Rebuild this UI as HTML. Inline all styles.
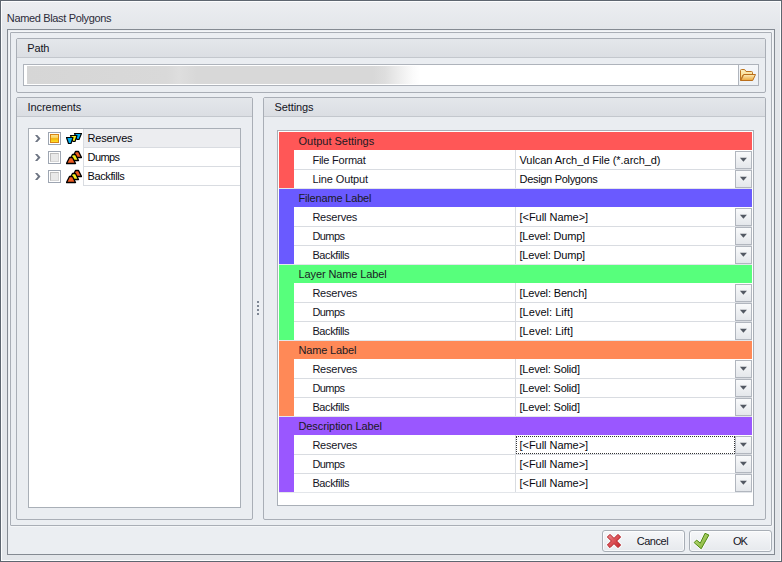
<!DOCTYPE html>
<html><head><meta charset="utf-8"><title>Named Blast Polygons</title>
<style>
html,body{margin:0;padding:0;}
body{width:782px;height:562px;overflow:hidden;background:#e3e6ea;font-family:"Liberation Sans", sans-serif;font-size:11px;color:#14141e;}
#w{position:absolute;left:0;top:0;width:780px;height:560px;border:1px solid #5e6670;background:linear-gradient(#eceef1,#e3e6ea 28px,#e3e6ea 28px);box-shadow:inset 0 0 0 1px #fcfdfe;}
.a{position:absolute;box-sizing:border-box;}
.t{position:absolute;white-space:pre;line-height:13px;height:13px;}
.grp{border:1px solid #a9aeb6;border-radius:2px;background:#eaedf1;}
.gh{left:0;top:0;right:0;height:19px;background:linear-gradient(#e4e7eb,#dbdee3);border-bottom:1px solid #c3c7cd;}
.btn{border:1px solid #a8aeb6;border-radius:3px;background:linear-gradient(#f6f7f9,#e6e9ed);box-shadow:inset 0 0 0 1px rgba(255,255,255,.7);}
.dd{border:1px solid #b1b6be;background:linear-gradient(#f9fafb,#e4e7eb);width:17px;height:18px;}
.cb{width:13px;height:13px;border:1px solid #9da5b1;background:#fff;}
.cb i{position:absolute;left:1px;top:1px;width:9px;height:9px;box-sizing:border-box;}
.chev{width:8px;height:10px;}
</style></head><body>
<div id="w"></div>

<span class="t" style="left:6.8px;top:12px;letter-spacing:-0.345px;color:#2c2c3a;">Named Blast Polygons</span>
<div class="a" style="left:7px;top:29px;width:768px;height:526px;border:1px solid #848a92;background:#ebeef2;"></div>
<div class="a" style="left:10px;top:32px;width:762px;height:494px;border:1px solid #a9aeb6;border-radius:1px;box-shadow:0 0 0 1px rgba(255,255,255,.45);"></div>
<div class="a grp" style="left:16px;top:38px;width:750px;height:55px;"><div class="a gh"></div></div>
<span class="t" style="left:27.3px;top:42px;letter-spacing:-0.150px;">Path</span>
<div class="a" style="left:23px;top:64px;width:736px;height:22px;border:1px solid #aeb3bb;background:#fff;"></div>
<div class="a" style="left:27px;top:66px;width:395px;height:18px;background:linear-gradient(90deg,#d6d6d6 0,#d9d9d9 140px,#dedede 152px,#d8d8d8 170px,#d8d8d8 346px,#dedede 358px,#efefef 374px,#fbfbfb 386px,#fff 393px);"></div>
<div class="a" style="left:738px;top:65px;width:20px;height:20px;border-left:1px solid #b0b5bd;background:linear-gradient(#f5f7fa,#ecf0f4);"></div>
<svg class="a" style="left:740px;top:69px" width="16" height="12" viewBox="0 0 16 12">
<defs><linearGradient id="fg" x1="0" y1="0" x2="0" y2="1"><stop offset="0" stop-color="#fdeebb"/><stop offset="1" stop-color="#eca638"/></linearGradient>
<linearGradient id="fb" x1="0" y1="0" x2="0" y2="1"><stop offset="0" stop-color="#fdf0c0"/><stop offset="1" stop-color="#f7cf6c"/></linearGradient></defs>
<path d="M0.5 11.5 V1.5 Q0.5 0.5 1.5 0.5 H4.6 L6 2.5 H11.5 Q12.5 2.5 12.5 3.5 V6 H3 Z" fill="url(#fb)" stroke="#bd751f" stroke-width="1" stroke-linejoin="round"/>
<path d="M0.8 11.5 L3.7 5.5 H15.5 L12.7 11.5 Z" fill="url(#fg)" stroke="#b96e1b" stroke-width="1" stroke-linejoin="round"/>
</svg>
<div class="a grp" style="left:16px;top:97px;width:237px;height:423px;"><div class="a gh"></div></div>
<span class="t" style="left:27.6px;top:101px;letter-spacing:-0.080px;">Increments</span>
<div class="a" style="left:28px;top:128px;width:213px;height:380px;border:1px solid #a9afb7;background:#fff;"></div>
<div class="a" style="left:83px;top:129px;width:157px;height:19px;background:#ecedf0;border-left:1px solid #d9dce1;border-bottom:1px solid #d9dce1;"></div>
<svg class="a" style="left:33px;top:133px" width="9" height="11" viewBox="0 0 9 11"><polygon points="2,2 4.3,2 7.5,5.5 4.3,9 2,9 4.9,5.5" fill="#6d7482"/></svg>
<div class="a cb" style="left:48px;top:132px;"><i style="background:linear-gradient(#fce492 0,#fad35a 40%,#f2b10c 52%,#f9cb14 75%,#fde02a 100%);border:1px solid #d98512;"></i></div>
<svg class="a" style="left:66px;top:130px" width="16" height="16" viewBox="0 0 16 16" stroke="#000" stroke-width="1.2" stroke-linejoin="round">
<polygon points="8.5,3.5 15.5,3.5 13,9.5 11,9.5" fill="#00aeef"/>
<polygon points="4.5,5.5 11,5.5 9,11.5 7,11.5" fill="#f6f01e"/>
<polygon points="0.5,7.5 7,7.5 5,13.5 2.5,13.5" fill="#00aeef"/></svg>
<span class="t" style="left:87.6px;top:132px;letter-spacing:-0.213px;color:#08080e;">Reserves</span>
<div class="a" style="left:83px;top:148px;width:157px;height:19px;background:#fff;border-left:1px solid #d9dce1;border-bottom:1px solid #d9dce1;"></div>
<svg class="a" style="left:33px;top:152px" width="9" height="11" viewBox="0 0 9 11"><polygon points="2,2 4.3,2 7.5,5.5 4.3,9 2,9 4.9,5.5" fill="#6d7482"/></svg>
<div class="a cb" style="left:48px;top:151px;"><i style="background:#e9e9e9;border:1px solid #bcbcbc;border-right-color:#d6d6d6;border-bottom-color:#d6d6d6;"></i></div>
<svg class="a" style="left:66px;top:149px" width="16" height="16" viewBox="0 0 16 16" stroke="#000" stroke-width="1.35" stroke-linejoin="round">
<polygon points="6.5,8.5 9.5,2.5 12.5,2.5 15.5,8.5" fill="#f15d22"/>
<polygon points="3.5,11.5 6.5,5.5 9.5,5.5 12.5,11.5" fill="#f6f01e"/>
<polygon points="0.5,14.5 3.5,8.5 6.5,8.5 9.5,14.5" fill="#f15d22"/></svg>
<span class="t" style="left:87.6px;top:151px;letter-spacing:-0.580px;color:#08080e;">Dumps</span>
<div class="a" style="left:83px;top:167px;width:157px;height:19px;background:#fff;border-left:1px solid #d9dce1;border-bottom:1px solid #d9dce1;"></div>
<svg class="a" style="left:33px;top:171px" width="9" height="11" viewBox="0 0 9 11"><polygon points="2,2 4.3,2 7.5,5.5 4.3,9 2,9 4.9,5.5" fill="#6d7482"/></svg>
<div class="a cb" style="left:48px;top:170px;"><i style="background:#e9e9e9;border:1px solid #bcbcbc;border-right-color:#d6d6d6;border-bottom-color:#d6d6d6;"></i></div>
<svg class="a" style="left:66px;top:168px" width="16" height="16" viewBox="0 0 16 16" stroke="#000" stroke-width="1.35" stroke-linejoin="round">
<polygon points="6.5,8.5 9.5,2.5 12.5,2.5 15.5,8.5" fill="#f15d22"/>
<polygon points="3.5,11.5 6.5,5.5 9.5,5.5 12.5,11.5" fill="#f6f01e"/>
<polygon points="0.5,14.5 3.5,8.5 6.5,8.5 9.5,14.5" fill="#f15d22"/></svg>
<span class="t" style="left:87.6px;top:170px;letter-spacing:-0.400px;color:#08080e;">Backfills</span>
<div class="a" style="left:257px;top:301px;width:2px;height:2px;background:#7f8794;"></div>
<div class="a" style="left:257px;top:305px;width:2px;height:2px;background:#7f8794;"></div>
<div class="a" style="left:257px;top:309px;width:2px;height:2px;background:#7f8794;"></div>
<div class="a" style="left:257px;top:313px;width:2px;height:2px;background:#7f8794;"></div>
<div class="a grp" style="left:263px;top:97px;width:503px;height:423px;"><div class="a gh"></div></div>
<span class="t" style="left:274.6px;top:101px;letter-spacing:-0.125px;">Settings</span>
<div class="a" style="left:277px;top:130px;width:477px;height:376px;border:1px solid #a9afb7;background:#fff;"></div>
<div class="a" style="left:279px;top:132px;width:473px;height:18px;background:#ff5757;"></div>
<div class="a" style="left:279px;top:150px;width:15px;height:38px;background:#ff5757;"></div>
<span class="t" style="left:298.5px;top:135px;letter-spacing:-0.007px;color:#1a1a24;">Output Settings</span>
<div class="a" style="left:294px;top:169px;width:458px;height:1px;background:#d9dce1;"></div>
<span class="t" style="left:312.4px;top:154px;letter-spacing:-0.218px;">File Format</span>
<span class="t" style="left:519.5px;top:154px;letter-spacing:-0.059px;color:#08080e;">Vulcan Arch_d File (*.arch_d)</span>
<div class="a dd" style="left:735px;top:151px;"><svg class="a" style="left:0;top:0" width="15" height="16" viewBox="0 0 15 16"><polygon points="3.9,5.8 10.9,5.8 7.4,9.8" fill="#535963"/></svg></div>
<div class="a" style="left:294px;top:188px;width:458px;height:1px;background:#d9dce1;"></div>
<span class="t" style="left:312.4px;top:173px;letter-spacing:-0.109px;">Line Output</span>
<span class="t" style="left:519.5px;top:173px;letter-spacing:-0.307px;color:#08080e;">Design Polygons</span>
<div class="a dd" style="left:735px;top:170px;"><svg class="a" style="left:0;top:0" width="15" height="16" viewBox="0 0 15 16"><polygon points="3.9,5.8 10.9,5.8 7.4,9.8" fill="#535963"/></svg></div>
<div class="a" style="left:279px;top:188px;width:473px;height:1px;background:#e3e6ea;"></div>
<div class="a" style="left:279px;top:189px;width:473px;height:18px;background:#6a5aff;"></div>
<div class="a" style="left:279px;top:207px;width:15px;height:57px;background:#6a5aff;"></div>
<span class="t" style="left:298.5px;top:192px;letter-spacing:-0.171px;color:#1a1a24;">Filename Label</span>
<div class="a" style="left:294px;top:226px;width:458px;height:1px;background:#d9dce1;"></div>
<span class="t" style="left:312.4px;top:211px;letter-spacing:-0.213px;">Reserves</span>
<span class="t" style="left:519.5px;top:211px;letter-spacing:-0.038px;color:#08080e;">[&lt;Full Name&gt;]</span>
<div class="a dd" style="left:735px;top:208px;"><svg class="a" style="left:0;top:0" width="15" height="16" viewBox="0 0 15 16"><polygon points="3.9,5.8 10.9,5.8 7.4,9.8" fill="#535963"/></svg></div>
<div class="a" style="left:294px;top:245px;width:458px;height:1px;background:#d9dce1;"></div>
<span class="t" style="left:312.4px;top:230px;letter-spacing:-0.580px;">Dumps</span>
<span class="t" style="left:519.5px;top:230px;letter-spacing:-0.185px;color:#08080e;">[Level: Dump]</span>
<div class="a dd" style="left:735px;top:227px;"><svg class="a" style="left:0;top:0" width="15" height="16" viewBox="0 0 15 16"><polygon points="3.9,5.8 10.9,5.8 7.4,9.8" fill="#535963"/></svg></div>
<div class="a" style="left:294px;top:264px;width:458px;height:1px;background:#d9dce1;"></div>
<span class="t" style="left:312.4px;top:249px;letter-spacing:-0.400px;">Backfills</span>
<span class="t" style="left:519.5px;top:249px;letter-spacing:-0.185px;color:#08080e;">[Level: Dump]</span>
<div class="a dd" style="left:735px;top:246px;"><svg class="a" style="left:0;top:0" width="15" height="16" viewBox="0 0 15 16"><polygon points="3.9,5.8 10.9,5.8 7.4,9.8" fill="#535963"/></svg></div>
<div class="a" style="left:279px;top:264px;width:473px;height:1px;background:#e3e6ea;"></div>
<div class="a" style="left:279px;top:265px;width:473px;height:18px;background:#57ff7c;"></div>
<div class="a" style="left:279px;top:283px;width:15px;height:57px;background:#57ff7c;"></div>
<span class="t" style="left:298.5px;top:268px;letter-spacing:-0.113px;color:#1a1a24;">Layer Name Label</span>
<div class="a" style="left:294px;top:302px;width:458px;height:1px;background:#d9dce1;"></div>
<span class="t" style="left:312.4px;top:287px;letter-spacing:-0.213px;">Reserves</span>
<span class="t" style="left:519.5px;top:287px;letter-spacing:-0.157px;color:#08080e;">[Level: Bench]</span>
<div class="a dd" style="left:735px;top:284px;"><svg class="a" style="left:0;top:0" width="15" height="16" viewBox="0 0 15 16"><polygon points="3.9,5.8 10.9,5.8 7.4,9.8" fill="#535963"/></svg></div>
<div class="a" style="left:294px;top:321px;width:458px;height:1px;background:#d9dce1;"></div>
<span class="t" style="left:312.4px;top:306px;letter-spacing:-0.580px;">Dumps</span>
<span class="t" style="left:519.5px;top:306px;letter-spacing:0.031px;color:#08080e;">[Level: Lift]</span>
<div class="a dd" style="left:735px;top:303px;"><svg class="a" style="left:0;top:0" width="15" height="16" viewBox="0 0 15 16"><polygon points="3.9,5.8 10.9,5.8 7.4,9.8" fill="#535963"/></svg></div>
<div class="a" style="left:294px;top:340px;width:458px;height:1px;background:#d9dce1;"></div>
<span class="t" style="left:312.4px;top:325px;letter-spacing:-0.400px;">Backfills</span>
<span class="t" style="left:519.5px;top:325px;letter-spacing:0.031px;color:#08080e;">[Level: Lift]</span>
<div class="a dd" style="left:735px;top:322px;"><svg class="a" style="left:0;top:0" width="15" height="16" viewBox="0 0 15 16"><polygon points="3.9,5.8 10.9,5.8 7.4,9.8" fill="#535963"/></svg></div>
<div class="a" style="left:279px;top:340px;width:473px;height:1px;background:#e3e6ea;"></div>
<div class="a" style="left:279px;top:341px;width:473px;height:18px;background:#ff8957;"></div>
<div class="a" style="left:279px;top:359px;width:15px;height:57px;background:#ff8957;"></div>
<span class="t" style="left:298.5px;top:344px;letter-spacing:-0.160px;color:#1a1a24;">Name Label</span>
<div class="a" style="left:294px;top:378px;width:458px;height:1px;background:#d9dce1;"></div>
<span class="t" style="left:312.4px;top:363px;letter-spacing:-0.213px;">Reserves</span>
<span class="t" style="left:519.5px;top:363px;letter-spacing:-0.186px;color:#08080e;">[Level: Solid]</span>
<div class="a dd" style="left:735px;top:360px;"><svg class="a" style="left:0;top:0" width="15" height="16" viewBox="0 0 15 16"><polygon points="3.9,5.8 10.9,5.8 7.4,9.8" fill="#535963"/></svg></div>
<div class="a" style="left:294px;top:397px;width:458px;height:1px;background:#d9dce1;"></div>
<span class="t" style="left:312.4px;top:382px;letter-spacing:-0.580px;">Dumps</span>
<span class="t" style="left:519.5px;top:382px;letter-spacing:-0.186px;color:#08080e;">[Level: Solid]</span>
<div class="a dd" style="left:735px;top:379px;"><svg class="a" style="left:0;top:0" width="15" height="16" viewBox="0 0 15 16"><polygon points="3.9,5.8 10.9,5.8 7.4,9.8" fill="#535963"/></svg></div>
<div class="a" style="left:294px;top:416px;width:458px;height:1px;background:#d9dce1;"></div>
<span class="t" style="left:312.4px;top:401px;letter-spacing:-0.400px;">Backfills</span>
<span class="t" style="left:519.5px;top:401px;letter-spacing:-0.186px;color:#08080e;">[Level: Solid]</span>
<div class="a dd" style="left:735px;top:398px;"><svg class="a" style="left:0;top:0" width="15" height="16" viewBox="0 0 15 16"><polygon points="3.9,5.8 10.9,5.8 7.4,9.8" fill="#535963"/></svg></div>
<div class="a" style="left:279px;top:416px;width:473px;height:1px;background:#e3e6ea;"></div>
<div class="a" style="left:279px;top:417px;width:473px;height:18px;background:#9a57ff;"></div>
<div class="a" style="left:279px;top:435px;width:15px;height:57px;background:#9a57ff;"></div>
<span class="t" style="left:298.5px;top:420px;letter-spacing:-0.094px;color:#1a1a24;">Description Label</span>
<div class="a" style="left:294px;top:454px;width:458px;height:1px;background:#d9dce1;"></div>
<span class="t" style="left:312.4px;top:439px;letter-spacing:-0.213px;">Reserves</span>
<span class="t" style="left:519.5px;top:439px;letter-spacing:-0.038px;color:#08080e;">[&lt;Full Name&gt;]</span>
<div class="a dd" style="left:735px;top:436px;"><svg class="a" style="left:0;top:0" width="15" height="16" viewBox="0 0 15 16"><polygon points="3.9,5.8 10.9,5.8 7.4,9.8" fill="#535963"/></svg></div>
<div class="a" style="left:516px;top:436px;width:219px;height:18px;border:1px dotted #333;"></div>
<div class="a" style="left:294px;top:473px;width:458px;height:1px;background:#d9dce1;"></div>
<span class="t" style="left:312.4px;top:458px;letter-spacing:-0.580px;">Dumps</span>
<span class="t" style="left:519.5px;top:458px;letter-spacing:-0.038px;color:#08080e;">[&lt;Full Name&gt;]</span>
<div class="a dd" style="left:735px;top:455px;"><svg class="a" style="left:0;top:0" width="15" height="16" viewBox="0 0 15 16"><polygon points="3.9,5.8 10.9,5.8 7.4,9.8" fill="#535963"/></svg></div>
<div class="a" style="left:294px;top:492px;width:458px;height:1px;background:#d9dce1;"></div>
<span class="t" style="left:312.4px;top:477px;letter-spacing:-0.400px;">Backfills</span>
<span class="t" style="left:519.5px;top:477px;letter-spacing:-0.038px;color:#08080e;">[&lt;Full Name&gt;]</span>
<div class="a dd" style="left:735px;top:474px;"><svg class="a" style="left:0;top:0" width="15" height="16" viewBox="0 0 15 16"><polygon points="3.9,5.8 10.9,5.8 7.4,9.8" fill="#535963"/></svg></div>
<div class="a" style="left:279px;top:492px;width:473px;height:1px;background:#e3e6ea;"></div>
<div class="a" style="left:515px;top:150px;width:1px;height:38px;background:#d9dce1;"></div>
<div class="a" style="left:515px;top:207px;width:1px;height:57px;background:#d9dce1;"></div>
<div class="a" style="left:515px;top:283px;width:1px;height:57px;background:#d9dce1;"></div>
<div class="a" style="left:515px;top:359px;width:1px;height:57px;background:#d9dce1;"></div>
<div class="a" style="left:515px;top:435px;width:1px;height:57px;background:#d9dce1;"></div>
<div class="a btn" style="left:602px;top:530px;width:83px;height:22px;"></div>
<svg class="a" style="left:605px;top:532px" width="18" height="18" viewBox="-2 -2 18 18">
<defs><linearGradient id="xg" x1="0" y1="0" x2="1" y2="1"><stop offset="0" stop-color="#ec9094"/><stop offset=".5" stop-color="#dc5056"/><stop offset="1" stop-color="#c4242a"/></linearGradient></defs>
<polygon points="0,3 3,0 7,4 11,0 14,3 10,7 14,11 11,14 7,10 3,14 0,11 4,7" fill="none" stroke="#fff" stroke-opacity=".5" stroke-width="2.6" stroke-linejoin="round"/>
<polygon points="0.4,3 3,0.4 7,4.4 11,0.4 13.6,3 9.6,7 13.6,11 11,13.6 7,9.6 3,13.6 0.4,11 4.4,7" fill="url(#xg)" stroke="#b3191f" stroke-width="1" stroke-linejoin="round"/>
</svg>
<span class="t" style="left:636.7px;top:535px;letter-spacing:-0.450px;">Cancel</span>
<div class="a btn" style="left:689px;top:530px;width:83px;height:22px;"></div>
<svg class="a" style="left:691px;top:530px" width="22" height="22" viewBox="691 530 22 22">
<defs><linearGradient id="cg" x1="0" y1="0" x2="1" y2="1"><stop offset="0" stop-color="#c1de86"/><stop offset="1" stop-color="#7dae2c"/></linearGradient></defs>
<polygon points="705,533.3 708.9,535 701.2,548.8 694.1,542.6 696.6,540.1 700.3,543.1" fill="none" stroke="#fff" stroke-opacity=".7" stroke-width="2.6" stroke-linejoin="round"/>
<polygon points="705,533.3 708.9,535 701.2,548.8 694.1,542.6 696.6,540.1 700.3,543.1" fill="url(#cg)" stroke="#4f8a12" stroke-width="1" stroke-linejoin="round"/>
</svg>
<span class="t" style="left:733px;top:535px;letter-spacing:-1.150px;">OK</span>
</body></html>
